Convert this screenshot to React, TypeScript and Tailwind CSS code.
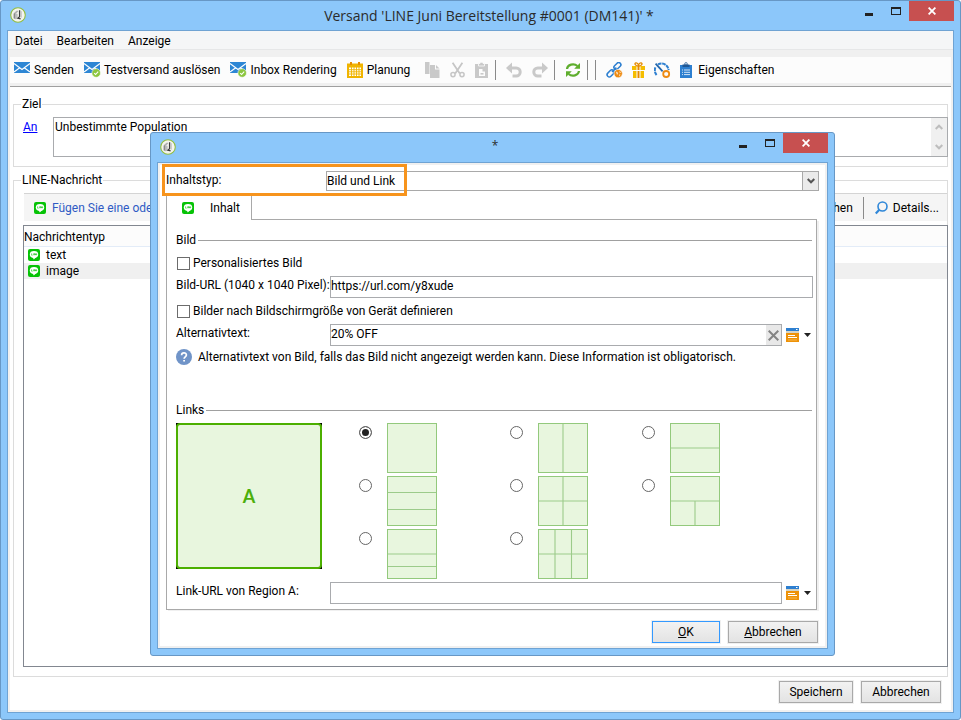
import React from "react";

function LineIcon() {
  return (
    <svg width="12" height="12" viewBox="0 0 12 12" className="shrink-0" aria-hidden="true">
      <rect width="12" height="12" rx="2" fill="#06c306" />
      <ellipse cx="6" cy="5.4" rx="4.2" ry="3.4" fill="#fff" />
      <path d="M4.5 8h3.8L5.8 10.4z" fill="#fff" />
      <path d="M3.6 4.4v1.8h1M5.6 4.4v1.8M6.5 6.2V4.5l1 1.6V4.4" stroke="#06c306" strokeWidth=".6" fill="none" />
      <path d="M8.4 4.4v1.8M8.4 5.3h.8" stroke="#06c306" strokeWidth=".6" />
    </svg>
  );
}

function AppLogo() {
  return (
    <svg width="16" height="16" viewBox="0 0 16 16" aria-hidden="true">
      <circle cx="8" cy="8" r="7.3" fill="#f4f4ee" stroke="#92bd3c" strokeWidth="1.1" />
      <path d="M3.600 6.600l2-.8v6.400l-2-1z" fill="#8a8a8a" />
      <path d="M5.600 6.200l2 .8v4.600l-2 .6z" fill="#bdbdbd" />
      <path d="M4 5.800l3-2.200 1.400.6-2 2z" fill="#b0b0b0" />
      <path d="M9.600 3.200v6.400L8 11.200l2.600.6" stroke="#3a3a3a" strokeWidth="1.300" fill="none" />
      <path d="M11.200 4.200v6.400" stroke="#bbb" strokeWidth="1" />
    </svg>
  );
}

function Envelope({ checked = false }: { checked?: boolean }) {
  return (
    <svg width="16" height="16" viewBox="0 0 16 16" className="shrink-0 overflow-visible" aria-hidden="true">
      <rect width="16" height="11" fill="#2d86d4" />
      <path d="M0 1.500l8 6 8-6M0 10l5.400-4M16 10l-5.400-4" stroke="#fff" strokeWidth="1.100" fill="none" />
      {checked && (
        <g>
          <circle cx="12.200" cy="11" r="4.300" fill="#8cc63f" stroke="#fcfcfc" strokeWidth=".6" />
          <path d="M10.200 11.100l1.400 1.400 2.600-2.900" stroke="#fff" strokeWidth="1.100" fill="none" />
        </g>
      )}
    </svg>
  );
}

function CalendarIcon() {
  return (
    <svg width="16" height="16" viewBox="0 0 16 16" className="shrink-0" aria-hidden="true">
      <path d="M0 1.500h16V16H0z" fill="#f0b400" />
      <path d="M3 0h2v3H3zM11 0h2v3h-2z" fill="#e58a00" />
      <path d="M2 5.500h12v8.500H2z" fill="#fff" />
      <path d="M4.500 5v9.500M7 5v9.500M9.500 5v9.500M12 5v9.500M1.500 7.700h13M1.500 9.800h13M1.500 12h13" stroke="#f0b400" strokeWidth=".9" />
    </svg>
  );
}

function CopyIcon() {
  return (
    <svg width="15" height="16" viewBox="0 0 15 16" aria-hidden="true">
      <path d="M0 0h4.500v12H0z" fill="#c9c9c9" />
      <path d="M5 3h5v4.500h4.500V16H5z" fill="#c9c9c9" />
      <path d="M11 3l3.500 3.500H11z" fill="#c9c9c9" />
    </svg>
  );
}

function CutIcon() {
  return (
    <svg width="15" height="16" viewBox="0 0 15 16" fill="none" stroke="#c6c6c6" aria-hidden="true">
      <path d="M2.600.8l7.200 10.600M12.400.8L5.200 11.400" strokeWidth="1.800" />
      <circle cx="3" cy="12.600" r="2.100" strokeWidth="1.500" />
      <circle cx="12" cy="12.600" r="2.100" strokeWidth="1.500" />
    </svg>
  );
}

function PasteIcon() {
  return (
    <svg width="13" height="16" viewBox="0 0 13 16" aria-hidden="true">
      <path d="M0 2h13v14H0z" fill="#c9c9c9" />
      <path d="M3.500 1.500h1.400a1.700 1.700 0 0 1 3.200 0h1.400V4h-6z" fill="#c9c9c9" stroke="#fcfcfc" strokeWidth=".8" />
      <path d="M4 7h3.500v2.500H10V14H4z" fill="#fcfcfc" />
      <path d="M5.500 11h3v1.600h-3z" fill="#c9c9c9" />
    </svg>
  );
}

function UndoIcon({ flip = false }: { flip?: boolean }) {
  return (
    <svg width="16" height="16" viewBox="0 0 16 16" aria-hidden="true">
      <g transform={flip ? "translate(16 0) scale(-1 1)" : undefined}>
        <path d="M4 6h6.200a4 4 0 0 1 0 8H6.500" stroke="#c9c9c9" strokeWidth="3" fill="none" />
        <path d="M0 6l6-5.600v11.200z" fill="#c9c9c9" />
      </g>
    </svg>
  );
}

function RefreshIcon() {
  return (
    <svg width="16" height="16" viewBox="0 0 16 16" aria-hidden="true">
      <path d="M2 7a6 5 0 0 1 10.400-3M14 9a6 5 0 0 1-10.400 3" stroke="#5fae2e" strokeWidth="2.200" fill="none" />
      <path d="M15 1v5.800H9.200zM1 15V9.200h5.800z" fill="#5fae2e" />
    </svg>
  );
}

function LinkGlobeIcon() {
  return (
    <svg width="17" height="16" viewBox="0 0 17 16" fill="none" aria-hidden="true">
      <g stroke="#2d7fd0" strokeWidth="1.500">
        <rect x="-4" y="-2.200" width="8" height="4.400" rx="2.200" transform="translate(11.400 4) rotate(-45)" />
        <rect x="-4" y="-2.200" width="8" height="4.400" rx="2.200" transform="translate(4.600 11.400) rotate(-45)" />
        <path d="M6 10l4.400-4.400" />
      </g>
      <circle cx="12.200" cy="11.600" r="4.200" fill="#ee8b12" stroke="#fcfcfc" strokeWidth=".6" />
      <path d="M9.800 9.600l1.800.6.4 1.800-1 .8zM13.400 8.800l1.600 1.600-1.200.8zM13 12.400l1.600.2-1.200 1.800z" fill="#fff" fillOpacity=".8" />
    </svg>
  );
}

function GiftIcon() {
  return (
    <svg width="13" height="16" viewBox="0 0 13 16" aria-hidden="true">
      <path d="M0 4h13v4H0zM1 9h11v7H1z" fill="#f5bd00" />
      <path d="M4.500 4h4v4h-4zM4.500 9h4v7h-4z" fill="#fff" />
      <path d="M5.500 4h2v4h-2zM5.500 9h2v7h-2z" fill="#e58a00" />
      <path d="M6.500 4C3 4 2 1 4 .8S6.500 3 6.500 4C6.500 3 7 .6 9 .8S10 4 6.500 4z" fill="none" stroke="#e58a00" strokeWidth="1.300" />
    </svg>
  );
}

function GaugeIcon() {
  return (
    <svg width="17" height="16" viewBox="0 0 17 16" fill="none" aria-hidden="true">
      <path d="M2.600 13A7.200 7.200 0 0 1 1.600 5M4 2.400A7.200 7.200 0 0 1 14.600 8" stroke="#2d7fd0" strokeWidth="2" strokeDasharray="3.600 .7" />
      <path d="M1.600 1.600l7 7.800" stroke="#2467ab" strokeWidth="1.800" />
      <circle cx="12.200" cy="12" r="3" stroke="#ee8b12" strokeWidth="1.800" />
    </svg>
  );
}

function ClipboardIcon() {
  return (
    <svg width="12" height="16" viewBox="0 0 12 16" className="mr-[2px] shrink-0" aria-hidden="true">
      <path d="M0 3h12v13H0z" fill="#2d7fd0" />
      <path d="M2.500 2.500h2a1.600 1.600 0 1 1 3 0h2V5h-7z" fill="#1f5794" />
      <circle cx="6" cy="1.800" r=".8" fill="#fff" />
      <path d="M2 8h1M4 8h6M2 10.300h1M4 10.300h6M2 12.600h1M4 12.600h6" stroke="#fff" strokeWidth=".8" />
    </svg>
  );
}

function MagnifierIcon() {
  return (
    <svg width="13" height="14" viewBox="0 0 13 14" className="shrink-0" fill="none" stroke="#2f87d8" aria-hidden="true">
      <circle cx="7.500" cy="5.500" r="4.500" strokeWidth="1.600" />
      <path d="M4.300 8.800L.8 12.500" strokeWidth="2.200" />
    </svg>
  );
}

function Chevron({ up = false, color }: { up?: boolean; color: string }) {
  return (
    <svg width="8" height="6" viewBox="0 0 8 6" fill="none" stroke={color} strokeWidth="2" aria-hidden="true">
      <path d={up ? "M.7 5L4 1.700 7.300 5" : "M.7 1L4 4.300 7.300 1"} />
    </svg>
  );
}

function TitleBar({ title, large = false }: { title: string; large?: boolean }) {
  return (
    <header className="flex h-[29px] items-start pl-1">
      <span className="mt-[6px]">
        <AppLogo />
      </span>
      <h1
        className={
          large
            ? "flex-1 pl-24 text-center font-['Open_Sans','Noto_Sans',sans-serif] text-[14px] leading-[30px] text-[#2b2b2b]"
            : "flex-1 pl-[84px] text-center font-['Open_Sans','Noto_Sans',sans-serif] text-[12px] leading-[26px] text-[#2b2b2b]"
        }
      >
        {title}
      </h1>
      <button type="button" aria-label="Minimieren" className="flex h-5 w-[26px] items-end justify-center pb-[5px]">
        <span className="h-[3px] w-2 bg-[#222]" />
      </button>
      <button type="button" aria-label="Maximieren" className="flex h-5 w-[27px] items-center justify-center">
        <span className="h-[8px] w-[10px] border border-t-2 border-[#222]" />
      </button>
      <button type="button" aria-label="Schließen" className="flex h-5 w-[45px] items-center justify-center bg-[#c75050]">
        <svg width="8" height="8" viewBox="0 0 8 8" stroke="#fff" strokeWidth="1.800" aria-hidden="true">
          <path d="M.6.600l6.800 6.800M7.400.600L.6 7.400" />
        </svg>
      </button>
    </header>
  );
}

function Separator() {
  return <span className="h-5 w-px shrink-0 bg-[#8a8a8a]" />;
}

function IconButton({ label, children, disabled = false }: { label: string; children: React.ReactNode; disabled?: boolean }) {
  return (
    <button type="button" aria-label={label} disabled={disabled} className="shrink-0">
      {children}
    </button>
  );
}

function ToolButton({ icon, children }: { icon: React.ReactNode; children: React.ReactNode }) {
  return (
    <button type="button" className="flex shrink-0 items-center gap-1 whitespace-nowrap">
      {icon}
      <span>{children}</span>
    </button>
  );
}

function PushButton({ children, className }: { children: React.ReactNode; className: string }) {
  return (
    <button
      type="button"
      className={"h-[22px] border bg-linear-to-b from-[#f2f2f2] to-[#e3e3e3] text-center leading-5 outline-1 outline-[#f0f0f0] " + className}
    >
      {children}
    </button>
  );
}

function Section({ title }: { title: string }) {
  return (
    <h2 className="flex h-4 items-center gap-[2px] leading-4">
      {title}
      <span className="mr-px h-px flex-1 bg-[#a0a0a0]" />
    </h2>
  );
}

function CheckRow({ id, label }: { id: string; label: string }) {
  return (
    <div className="flex h-4 items-center gap-[3px] pl-px">
      <input id={id} type="checkbox" className="size-[13px] appearance-none border border-[#6c6c6c] bg-white" />
      <label htmlFor={id}>{label}</label>
    </div>
  );
}

function FieldRow({ id, label, children }: { id: string; label: string; children: React.ReactNode }) {
  return (
    <div className="flex h-[22px] items-stretch">
      <label htmlFor={id} className="w-[154px] shrink-0 whitespace-nowrap leading-[18px]">
        {label}
      </label>
      {children}
    </div>
  );
}

function PersonalizeButton() {
  return (
    <button type="button" aria-label="Personalisierungsfeld einfügen" className="ml-1 flex w-[27px] shrink-0 items-center gap-[5px]">
      <svg width="13" height="14" viewBox="0 0 13 14" className="shrink-0" aria-hidden="true">
        <path d="M0 0h13v3H0z" fill="#2d7fd0" />
        <path d="M10 1h1.500v1H10z" fill="#fff" />
        <path d="M0 3h13v2H0z" fill="#d8d4c4" />
        <path d="M0 5h13v9H0z" fill="#ee9208" />
        <path d="M2 7.500h7M2 9.500h9" stroke="#fff" strokeWidth="1.200" />
        <path d="M2 12h9" stroke="#f7c063" strokeWidth=".8" />
      </svg>
      <svg width="7" height="4" viewBox="0 0 7 4" className="shrink-0" aria-hidden="true">
        <path d="M0 0h7L3.500 4z" fill="#222" />
      </svg>
    </button>
  );
}

type Layout = { name: string; lines: string; checked?: boolean };

const layouts: Layout[] = [
  { name: "Eine Region", lines: "", checked: true },
  { name: "Zwei Spalten", lines: "M25 1v48" },
  { name: "Zwei Zeilen", lines: "M1 25h48" },
  { name: "Drei Zeilen", lines: "M1 16.500h48M1 33.500h48" },
  { name: "Vier Regionen", lines: "M25 1v48M1 25h48" },
  { name: "Eine Zeile und zwei Spalten", lines: "M1 25h48M25 25v24" },
  { name: "Große Zeile und zwei kleine", lines: "M1 25h48M1 37.500h48" },
  { name: "Sechs Regionen", lines: "M1 25h48M17 1v48M33.500 1v48" },
];

function LayoutOption({ layout }: { layout: Layout }) {
  return (
    <label className="flex w-[78px] items-start justify-between">
      <input
        type="radio"
        name="layout"
        aria-label={layout.name}
        defaultChecked={layout.checked}
        className="mt-[3px] size-[13px] appearance-none rounded-full border border-[#666] bg-white checked:bg-[#222] checked:shadow-[inset_0_0_0_2px_white]"
      />
      <svg width="50" height="50" viewBox="0 0 50 50" aria-hidden="true">
        <rect x=".5" y=".5" width="49" height="49" fill="#e8f6de" stroke="#93c97c" />
        <path d={layout.lines} stroke="#9ccb8a" strokeWidth="1.100" />
      </svg>
    </label>
  );
}

function ContentDialog() {
  return (
    <section
      role="dialog"
      aria-label="Inhalt"
      className="absolute top-[131px] left-[149px] w-[685px] rounded-[3px] border border-[#6797c5] bg-[#8cc7fa] px-[6px] pb-[6px]"
    >
      <div className="-mx-[6px] pr-[6px] pl-[5px]">
        <TitleBar title="*" />
      </div>
      <div className="border border-[#6fa3d3] bg-white">
        <div className="border-2 border-[#f0f0f0] px-[6px] pt-[6px] pb-[3px]">
          <div className="relative flex h-5 items-stretch">
            <span className="pointer-events-none absolute -top-[7px] -left-[4px] h-8 w-[245px] border-3 border-[#f7941d]" />
            <label htmlFor="type" className="w-[160px] leading-[18px]">
              Inhaltstyp:
            </label>
            <select id="type" className="flex-1 appearance-none border border-[#a9a9a9] bg-white leading-4">
              <option>Bild und Link</option>
            </select>
            <span className="pointer-events-none absolute top-px right-px flex h-[18px] w-4 items-center justify-center border-l border-[#a9a9a9] bg-[#ebebeb]">
              <Chevron color="#555" />
            </span>
          </div>

          <div className="mt-[5px] mr-[2px] flex h-6" role="tablist">
            <button type="button" role="tab" aria-selected="true" className="flex w-[86px] items-center gap-4 border-x border-[#a9a9a9] pl-[15px]">
              <LineIcon />
              Inhalt
            </button>
            <span className="flex-1 border-b border-[#a9a9a9]" />
          </div>
          <div role="tabpanel" className="mr-[2px] border-x border-b border-[#a9a9a9] pt-3 pr-[3px] pb-[5px] pl-[9px] shadow-[2px_1px_0_#f0f0f0]">
            <Section title="Bild" />
            <div className="mt-[7px]">
              <CheckRow id="personalized" label="Personalisiertes Bild" />
            </div>
            <div className="mt-[5px]">
              <FieldRow id="image-url" label="Bild-URL (1040 x 1040 Pixel):">
                <input id="image-url" type="text" defaultValue="https://url.com/y8xude" className="min-w-0 flex-1 border border-[#a9abae] pb-[2px]" />
              </FieldRow>
            </div>
            <div className="mt-[5px]">
              <CheckRow id="per-size" label="Bilder nach Bildschirmgröße von Gerät definieren" />
            </div>
            <div className="mt-[5px]">
              <FieldRow id="alt" label="Alternativtext:">
                <span className="flex min-w-0 flex-1 border border-[#a9abae]">
                  <input id="alt" type="text" defaultValue="20% OFF" className="min-w-0 flex-1 pb-[2px]" />
                  <button type="button" aria-label="Text löschen" className="flex w-[15px] items-center justify-center bg-[#e8e8e8]">
                    <svg width="11" height="11" viewBox="0 0 11 11" stroke="#848484" strokeWidth="2" aria-hidden="true">
                      <path d="M.7.700l9.600 9.600M10.300.700L.7 10.300" />
                    </svg>
                  </button>
                </span>
                <PersonalizeButton />
              </FieldRow>
            </div>
            <p className="mt-[3px] flex h-4 items-center gap-[6px] whitespace-nowrap">
              <svg width="16" height="16" viewBox="0 0 16 16" className="shrink-0" fill="none" aria-hidden="true">
                <circle cx="8" cy="8" r="8" fill="#7094c8" />
                <path d="M5.600 6.200C5.600 3.200 10.400 3.200 10.400 6c0 1.700-2.300 1.900-2.300 3.700" stroke="#fff" strokeWidth="1.700" />
                <path d="M7.200 10.900H9v1.700H7.200z" fill="#fff" />
              </svg>
              Alternativtext von Bild, falls das Bild nicht angezeigt werden kann. Diese Information ist obligatorisch.
            </p>
            <div className="mt-[37px]">
              <Section title="Links" />
            </div>
            <div className="mt-[5px] flex items-start gap-[37px]">
              <div className="size-[146px] bg-black">
                <div className="flex size-full items-center justify-center rounded-[4px] border-2 border-[#4caf00] bg-[#e8f6de] font-['Lato',sans-serif] text-[18px] font-bold text-[#4caf0a]">
                  A
                </div>
              </div>
              <div className="grid grid-cols-[151px_132px_78px] gap-y-[3px]">
                {layouts.map((layout) => (
                  <LayoutOption key={layout.name} layout={layout} />
                ))}
              </div>
            </div>
            <div className="mt-[3px]">
              <FieldRow id="region-url" label="Link-URL von Region A:">
                <input id="region-url" type="text" className="min-w-0 flex-1 border border-[#a9abae]" />
                <PersonalizeButton />
              </FieldRow>
            </div>
          </div>

          <footer className="mt-[11px] mr-px flex justify-end gap-2">
            <PushButton className="w-[68px] border-[#3399ff]">
              <u>O</u>K
            </PushButton>
            <PushButton className="w-[90px] border-[#a9a9a9]">
              <u>A</u>bbrechen
            </PushButton>
          </footer>
        </div>
      </div>
    </section>
  );
}

export default function App() {
  return (
    <div className="relative flex h-screen flex-col rounded-[3px] border border-[#6797c5] bg-[#8cc7fa] pb-[6px] font-['Roboto','Open_Sans',sans-serif] text-[12px] leading-4 text-black">
      <div className="pr-[6px] pl-[5px]">
        <TitleBar title="Versand 'LINE Juni Bereitstellung #0001 (DM141)' *" large />
      </div>
      <div className="mx-[6px] flex flex-1 flex-col border border-[#6fa3d3] bg-[#f0f0f0]">
        <nav className="flex h-[19px] items-center gap-[14px] border-b border-[#e6e7e8] bg-[#f5f6f7] pt-px pl-[7px]">
          <button type="button">Datei</button>
          <button type="button">Bearbeiten</button>
          <button type="button">Anzeige</button>
        </nav>
        <div className="mx-[2px] mt-[7px] flex h-[26px] items-center bg-[#fcfcfc] pl-1" role="toolbar">
          <div className="flex gap-[10px]">
            <ToolButton icon={<Envelope />}>Senden</ToolButton>
            <ToolButton icon={<Envelope checked />}>Testversand auslösen</ToolButton>
            <ToolButton icon={<Envelope checked />}>Inbox Rendering</ToolButton>
            <ToolButton icon={<CalendarIcon />}>Planung</ToolButton>
          </div>
          <div className="ml-[15px] flex items-center gap-[10px]">
            <IconButton label="Kopieren" disabled><CopyIcon /></IconButton>
            <IconButton label="Ausschneiden" disabled><CutIcon /></IconButton>
            <IconButton label="Einfügen" disabled><PasteIcon /></IconButton>
          </div>
          <div className="ml-[7px] flex items-center gap-[10px]">
            <Separator />
            <IconButton label="Rückgängig" disabled><UndoIcon /></IconButton>
            <IconButton label="Wiederholen" disabled><UndoIcon flip /></IconButton>
          </div>
          <div className="ml-[6px] flex items-center gap-[10px]">
            <Separator />
            <IconButton label="Aktualisieren"><RefreshIcon /></IconButton>
          </div>
          <div className="ml-[6px] flex items-center gap-[7px]">
            <Separator />
            <Separator />
          </div>
          <div className="ml-[10px] flex items-center gap-[9px]">
            <IconButton label="Verknüpfungen"><LinkGlobeIcon /></IconButton>
            <IconButton label="Angebote"><GiftIcon /></IconButton>
            <IconButton label="Analyse"><GaugeIcon /></IconButton>
            <ToolButton icon={<ClipboardIcon />}>Eigenschaften</ToolButton>
          </div>
        </div>
        <main className="mx-[2px] mt-[3px] mb-[2px] flex flex-1 flex-col border-t border-[#a0a0a0] bg-white px-[3px] pt-[9px] pb-[7px]">
          <fieldset className="border border-[#dcdcdc] pb-[9px] pl-[9px]">
            <legend className="-ml-[2px] px-px leading-4">Ziel</legend>
            <div className="mt-[5px] -mr-px flex items-start">
              <a href="#ziel" className="w-[30px] leading-5 text-[#0000ff] underline">An</a>
              <div className="flex h-10 flex-1 border border-[#a9abae]">
                <textarea aria-label="Ziel" defaultValue="Unbestimmte Population" className="h-full flex-1 resize-none overflow-hidden px-px pt-px" />
                <div className="flex w-4 flex-col items-center justify-between bg-[#f0f0f0] py-[6px]">
                  <Chevron up color="#bdbdbd" />
                  <Chevron color="#bdbdbd" />
                </div>
              </div>
            </div>
          </fieldset>
          <fieldset className="mt-[5px] flex flex-1 flex-col border border-[#dcdcdc] pb-[9px] pl-[9px]">
            <legend className="-ml-[2px] px-px leading-4">LINE-Nachricht</legend>
            <div className="mt-[5px] ml-px flex h-7 items-center border-t border-[#d4d4d4] bg-[#f5f5f5] pl-[10px]">
              <button type="button" className="flex items-center gap-[6px] whitespace-nowrap text-[#2f5bc4]">
                <LineIcon />
                Fügen Sie eine oder
              </button>
              <button type="button" className="ml-auto">Löschen</button>
              <span className="mr-[11px] ml-[10px] h-[22px] w-px bg-[#8a8a8a]" />
              <button type="button" className="mr-2 flex items-center gap-[5px]">
                <MagnifierIcon />
                Details...
              </button>
            </div>
            <div className="mt-1 -mr-px flex-1 border border-[#828790]">
              <table className="w-full border-collapse">
                <thead>
                  <tr className="h-5 border-b border-[#e3ecf8] bg-[#fcfcfc]">
                    <th className="p-0 pt-[2px] text-left font-normal">Nachrichtentyp</th>
                  </tr>
                </thead>
                <tbody>
                  <tr className="h-4">
                    <td className="p-0">
                      <span className="flex h-4 items-center gap-[6px] pl-1"><LineIcon />text</span>
                    </td>
                  </tr>
                  <tr className="h-4 bg-[#f0f0f0]">
                    <td className="p-0">
                      <span className="flex h-4 items-center gap-[6px] pl-1"><LineIcon />image</span>
                    </td>
                  </tr>
                </tbody>
              </table>
            </div>
          </fieldset>
          <footer className="mt-1 mr-[7px] flex justify-end gap-2">
            <PushButton className="w-[74px] border-[#a9a9a9]">Speichern</PushButton>
            <PushButton className="w-[80px] border-[#a9a9a9]">Abbrechen</PushButton>
          </footer>
        </main>
      </div>
      <ContentDialog />
    </div>
  );
}
